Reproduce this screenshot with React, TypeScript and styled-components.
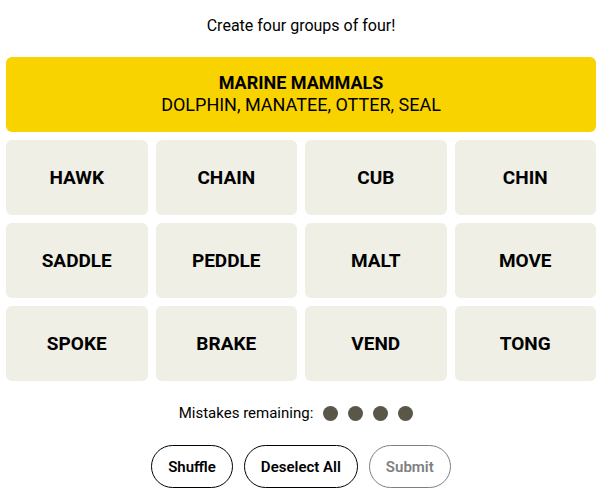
import React from "react";
import styled, { createGlobalStyle } from "styled-components";

const Global = createGlobalStyle`
  html, body { margin: 0; padding: 0; background: #fff; }
  body { font-family: "Roboto", "Liberation Sans", sans-serif; color: #000; }
`;

const Page = styled.div`
  width: 600px;
  padding: 16px 4px 0 6px;
  box-sizing: border-box;
  display: flex;
  flex-direction: column;
  align-items: stretch;
`;

const Prompt = styled.p`
  margin: 0;
  height: 20px;
  line-height: 20px;
  text-align: center;
  font-size: 16px;
  font-weight: 400;
`;

const Board = styled.div`
  margin-top: 21px;
  display: grid;
  grid-template-columns: repeat(4, 1fr);
  grid-auto-rows: 75px;
  gap: 8px;
`;

const Solved = styled.div<{ $color: string }>`
  grid-column: 1 / -1;
  background: ${(p) => p.$color};
  border-radius: 6px;
  display: flex;
  flex-direction: column;
  align-items: center;
  justify-content: center;
  padding-bottom: 2px;
  font-size: 18px;
  line-height: 22px;
  text-transform: uppercase;
`;

const SolvedTitle = styled.div`
  font-weight: 700;
`;

const SolvedWords = styled.div`
  font-weight: 400;
`;

const Tile = styled.button`
  border: none;
  border-radius: 6px;
  background: #efefe6;
  font-family: inherit;
  font-size: 19px;
  font-weight: 700;
  color: #000;
  text-transform: uppercase;
  padding: 0;
  cursor: pointer;
`;

const Mistakes = styled.div`
  margin-top: 22px;
  padding-right: 10px;
  display: flex;
  align-items: center;
  justify-content: center;
  gap: 10px;
  font-size: 15px;
  height: 20px;
`;

const Dots = styled.div`
  display: flex;
  gap: 10px;
`;

const Dot = styled.span`
  width: 15px;
  height: 15px;
  border-radius: 50%;
  background: #5a5749;
`;

const Controls = styled.div`
  margin-top: 22px;
  display: flex;
  justify-content: center;
  gap: 11px;
`;

const Pill = styled.button<{ $disabled?: boolean }>`
  height: 43px;
  padding: 0 16px;
  border-radius: 999px;
  background: #fff;
  border: 1px solid ${(p) => (p.$disabled ? "#7f7f7f" : "#000")};
  color: ${(p) => (p.$disabled ? "#7f7f7f" : "#000")};
  font-family: inherit;
  font-size: 15px;
  font-weight: 600;
  cursor: pointer;
`;

const words = [
  "HAWK", "CHAIN", "CUB", "CHIN",
  "SADDLE", "PEDDLE", "MALT", "MOVE",
  "SPOKE", "BRAKE", "VEND", "TONG",
];

export default function App() {
  return (
    <>
      <Global />
      <Page>
        <Prompt>Create four groups of four!</Prompt>
        <Board>
          <Solved $color="#f9d300">
            <SolvedTitle>Marine Mammals</SolvedTitle>
            <SolvedWords>Dolphin, Manatee, Otter, Seal</SolvedWords>
          </Solved>
          {words.map((w) => (
            <Tile key={w}>{w}</Tile>
          ))}
        </Board>
        <Mistakes>
          Mistakes remaining:
          <Dots>
            <Dot />
            <Dot />
            <Dot />
            <Dot />
          </Dots>
        </Mistakes>
        <Controls>
          <Pill>Shuffle</Pill>
          <Pill>Deselect All</Pill>
          <Pill $disabled>Submit</Pill>
        </Controls>
      </Page>
    </>
  );
}
